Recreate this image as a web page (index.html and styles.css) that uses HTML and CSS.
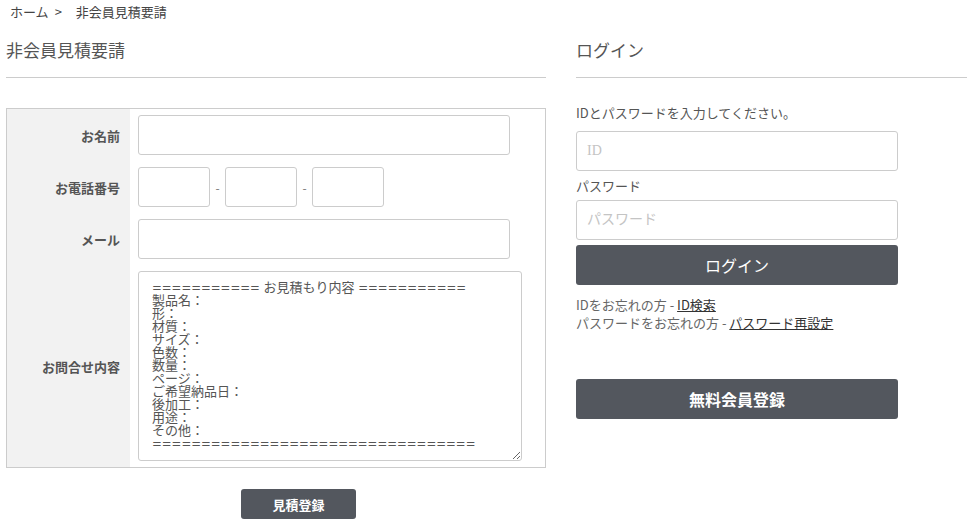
FILE: index.html
```html
<!DOCTYPE html>
<html lang="ja">
<head>
  <meta charset="UTF-8">
  <meta name="viewport" content="width=device-width, initial-scale=1.0">
  <title>非会員見積要請</title>
  <link rel="stylesheet" href="styles.css">
</head>
<body>

<div class="breadcrumb">ホーム<span class="sep">&gt;</span>非会員見積要請</div>

<div class="content">
  <div class="estimate">
    <h2 class="section-title">非会員見積要請</h2>

    <table class="form-table">
      <tr>
        <th>お名前</th>
        <td><input type="text" class="input-wide"></td>
      </tr>
      <tr>
        <th>お電話番号</th>
        <td>
          <div class="tel">
            <input type="text" class="input-tel">
            <span class="dash">-</span>
            <input type="text" class="input-tel">
            <span class="dash">-</span>
            <input type="text" class="input-tel">
          </div>
        </td>
      </tr>
      <tr>
        <th>メール</th>
        <td><input type="text" class="input-wide"></td>
      </tr>
      <tr>
        <th>お問合せ内容</th>
        <td><textarea class="inquiry">=========== お見積もり内容 ===========
製品名：
形：
材質：
サイズ：
色数：
数量：
ページ：
ご希望納品日：
後加工：
用途：
その他：
=================================</textarea></td>
      </tr>
    </table>

    <button class="btn btn-small">見積登録</button>
  </div>

  <div class="login">
    <h2 class="section-title">ログイン</h2>
    <p class="note">IDとパスワードを入力してください。</p>
    <input type="text" class="input-login" placeholder="ID">
    <label class="pw-label">パスワード</label>
    <input type="password" class="input-login input-pw" placeholder="パスワード">
    <button class="btn btn-login">ログイン</button>
    <div class="forgot">
      <p>IDをお忘れの方 - <a href="#">ID検索</a></p>
      <p>パスワードをお忘れの方 - <a href="#">パスワード再設定</a></p>
    </div>
    <button class="btn btn-join">無料会員登録</button>
  </div>
</div>

</body>
</html>
```

FILE: styles.css
```css
body {
  margin: 0;
  font-family: "Noto Sans CJK JP", "Noto Sans", sans-serif;
  color: #555;
  background: #fff;
  overflow: hidden;
}
.breadcrumb {
  padding: 0 10px;
  line-height: 24px;
  font-size: 13px;
  color: #444;
}
.breadcrumb .sep {
  margin: 0 14px 0 6px;
}
.content {
  display: flex;
  gap: 30px;
  padding-left: 6px;
}
.estimate {
  width: 540px;
  flex-shrink: 0;
}
.login {
  flex: 1;
}
.section-title {
  margin: 0;
  padding: 14px 0 15px;
  line-height: 24px;
  font-size: 17px;
  font-weight: normal;
  color: #555;
  border-bottom: 1px solid #ccc;
}
.form-table {
  width: 100%;
  margin-top: 30px;
  border: 1px solid #ccc;
  border-collapse: collapse;
}
.form-table th {
  width: 113px;
  padding: 0 10px 0 0;
  background: #f2f2f2;
  text-align: right;
  font-size: 13px;
  font-weight: bold;
  color: #555;
}
.form-table td {
  padding: 6px 0 6px 8px;
}
.form-table input,
.login input {
  box-sizing: border-box;
  height: 40px;
  border: 1px solid #ccc;
  border-radius: 3px;
  padding: 0 10px;
  font-family: inherit;
  font-size: 13px;
  color: #555;
}
.input-wide {
  width: 372px;
  display: block;
}
.tel {
  display: flex;
  align-items: center;
}
.input-tel {
  width: 72px;
}
.dash {
  width: 15px;
  text-align: center;
  font-size: 12px;
  color: #777;
}
.inquiry {
  display: block;
  box-sizing: border-box;
  width: 384px;
  height: 190px;
  margin: 0;
  padding: 9px 13px;
  border: 1px solid #ccc;
  border-radius: 3px;
  font-family: "DejaVu Sans Condensed", "Noto Sans CJK JP", sans-serif;
  font-size: 13px;
  line-height: 13px;
  color: #555;
  resize: vertical;
}
.btn {
  display: block;
  border: none;
  border-radius: 3px;
  background: #53575e;
  color: #fff;
  font-family: inherit;
  cursor: pointer;
}
.btn-small {
  width: 115px;
  height: 30px;
  margin: 21px 0 0 235px;
  font-size: 13px;
  font-weight: bold;
}
.note {
  margin: 26px 0 9px;
  line-height: 18px;
  font-size: 13px;
  color: #555;
}
.login input {
  display: block;
  width: 322px;
  font-family: "Liberation Serif", "Noto Sans CJK JP", serif;
  font-size: 14px;
}
.login input::placeholder {
  color: #c4c4c4;
}
.pw-label {
  display: block;
  margin-top: 6px;
  line-height: 18px;
  font-size: 13px;
  color: #555;
}
.input-pw {
  margin-top: 5px;
}
.btn-login {
  width: 322px;
  height: 40px;
  margin-top: 5px;
  font-size: 16px;
  font-weight: normal;
}
.forgot {
  margin-top: 11px;
  font-size: 13px;
  color: #666;
}
.forgot p {
  margin: 0;
  line-height: 18px;
}
.forgot a {
  color: #333;
  text-decoration: underline;
}
.btn-join {
  width: 322px;
  height: 40px;
  margin-top: 47px;
  font-size: 16px;
  font-weight: bold;
}
```
